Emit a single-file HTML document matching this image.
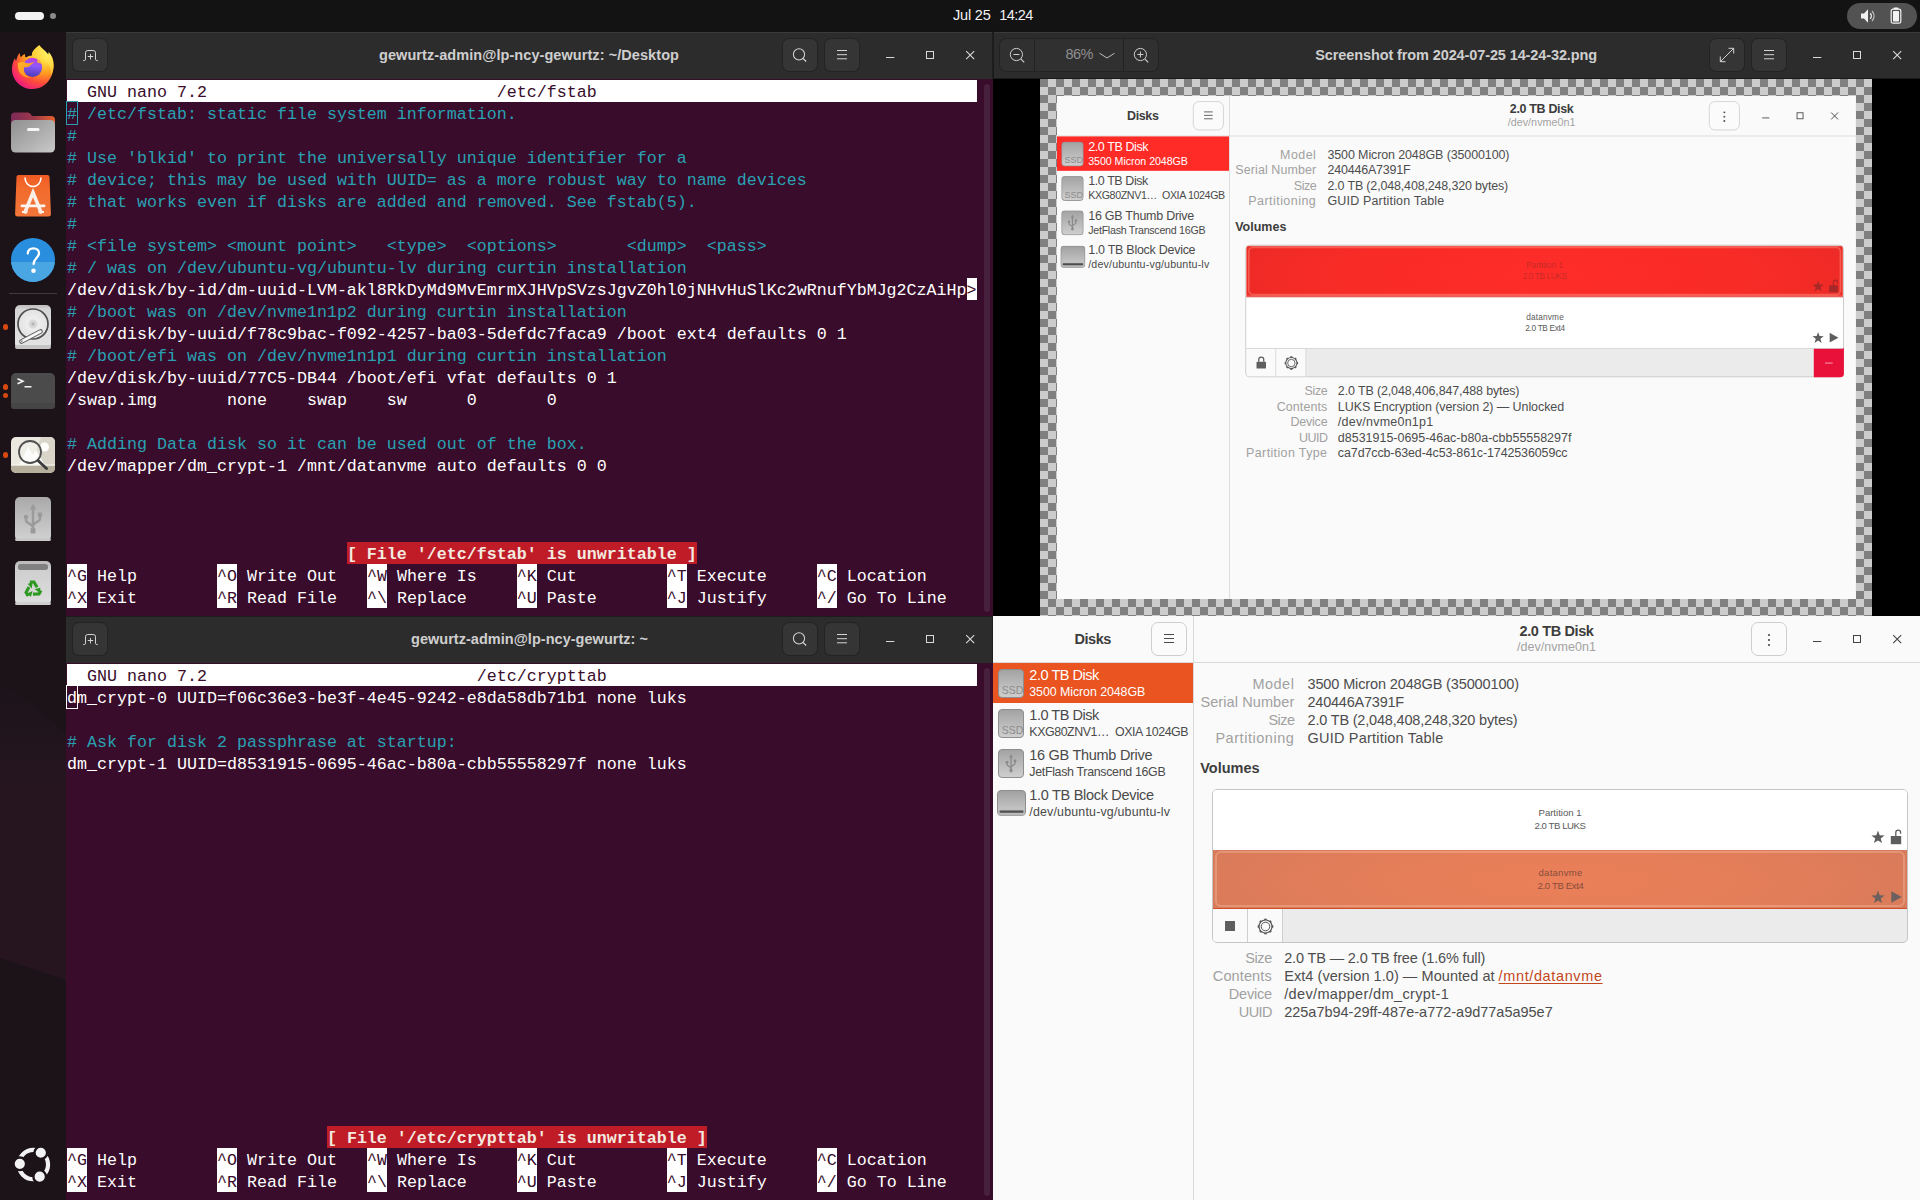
<!DOCTYPE html><html><head><meta charset="utf-8"><title>desktop</title><style>
*{box-sizing:border-box;margin:0;padding:0}
html,body{width:1920px;height:1200px;overflow:hidden;background:#1c1319}
body{position:relative;font-family:"Liberation Sans",sans-serif;font-size:14.5px;color:#3d3d3d}
.a{position:absolute}
.t{position:absolute;white-space:pre;line-height:1;}
.b{font-weight:700}
.mono{font-family:"Liberation Mono",monospace;font-size:16.667px;}
#topbar{left:0;top:0;width:1920px;height:32px;background:#131313}
#dock{left:0;top:32px;width:66px;height:1168px;background:#1c1319}
.hdr{background:#2c2c2c;border-top:1px solid #3b3b3b}
.hbtn{background:#353535;border-radius:7px;box-shadow:inset 0 0 0 1px #232323}
.term{background:#380c2a;overflow:hidden}
.row{position:absolute;left:1px;height:22px;line-height:22px;white-space:pre;font-family:"Liberation Mono",monospace;font-size:16.667px;color:#fff;padding-top:2px}
.c{color:#2aa1b3}
.inv{color:#380c2a}
.err{color:#f3ebe0;font-weight:700}
.lbl{color:#9d9d9d}
</style></head><body><div id="dock" class="a"><div class="a" style="left:0;top:0;width:66px;height:1168px;background:linear-gradient(180deg,rgba(38,21,31,0) 650px,#26151f 760px,#26151f 100%);clip-path:polygon(0 648px,66px 701px,66px 948px,0 926px)"></div></div><svg class="a" style="left:9px;top:43px;" width="48" height="48" viewBox="0 0 48 48">
<defs>
<radialGradient id="ffa" cx="0.80" cy="0.12" r="1.05"><stop offset="0" stop-color="#fff36a"/><stop offset="0.28" stop-color="#ffd43a"/><stop offset="0.5" stop-color="#ff9a1f"/><stop offset="0.72" stop-color="#ff4b3a"/><stop offset="0.92" stop-color="#f0207a"/><stop offset="1" stop-color="#e31587"/></radialGradient>
<linearGradient id="ffb" x1="0.5" y1="0" x2="0.4" y2="1"><stop offset="0" stop-color="#c23be0"/><stop offset="0.4" stop-color="#8f58fb"/><stop offset="1" stop-color="#4a3bb5"/></linearGradient>
<linearGradient id="ffc" x1="0" y1="0" x2="1" y2="1"><stop offset="0" stop-color="#ffb52e"/><stop offset="1" stop-color="#ff8a1a"/></linearGradient>
<radialGradient id="ffd" cx="0.75" cy="0.2" r="0.8"><stop offset="0" stop-color="#fff56a"/><stop offset="1" stop-color="#ffc52e"/></radialGradient>
</defs>
<path d="M30.200 2.300C32.500 5.500 36.500 8 39.300 11.800c.5-.9.500-1.800.3-2.700 3.100 3.300 5 7.900 5 13.200C44.600 35.800 35.500 46 23.600 46S3 36.800 3 26.200c0-4.300 1.100-8.100 3-11.200.1 1.200.5 2.300 1.100 3.300.6-3.600 2-6.400 3.500-8.500.1 1.700.5 3.200 1.200 4.400 1.100-1.500 2.700-2.700 4.200-3.200-.2 1.300.1 2.600.7 3.600 2-1.400 4.300-2.100 6.300-2.100C22.500 8.800 26 5.500 30.200 2.300z" fill="url(#ffa)"/>
<path d="M30.200 2.300C32.500 5.500 36.500 8 39.300 11.800c.5-.9.500-1.800.3-2.700 3.100 3.300 5 7.900 5 13.200 0 4-1.200 7.700-3.200 10.800 1-3.300.6-7.500-1.400-10.800-2-3.300-5.300-5.800-9.300-6.500-2.800-.5-5.500-.2-7.700-3.300C22.500 8.800 26 5.500 30.200 2.300z" fill="url(#ffd)" opacity="0.85"/>
<circle cx="23.500" cy="24.400" r="9.600" fill="url(#ffb)"/>
<path d="M8.800 20.300c2.600-1.700 5.500-1.500 7.700-.6 2.200.9 4.600.6 6.700-.2 1.100-.4 2-.2 2.600.3-1.900.2-3.400 1.500-4.800 2.900-1.500 1.400-3.700 1.700-5.500 1.300 -1 2.300-.6 4.800.7 6.700 1.300 1.900 3.300 3.200 5.500 3.600-5 1.300-10.300-1.700-12-6.700-.8-2.400-.9-5-.9-7.300z" fill="url(#ffc)"/>
<path d="M28 16.300c2.400 1 4 3 4.700 5.200-1.300-1.300-2.900-2-4.500-2.100.3-1 .2-2.100-.2-3.100z" fill="#ffb02e"/>
</svg><svg class="a" style="left:11px;top:110px;" width="44" height="44" viewBox="0 0 44 44">
<defs>
<linearGradient id="fla" x1="0" y1="0" x2="1" y2="0"><stop offset="0" stop-color="#7b2a58"/><stop offset="0.55" stop-color="#a03a4a"/><stop offset="1" stop-color="#e8632a"/></linearGradient>
<linearGradient id="flb" x1="0" y1="0" x2="1" y2="1"><stop offset="0" stop-color="#8f8f8f"/><stop offset="1" stop-color="#c9c9c9"/></linearGradient>
</defs>
<path d="M0 6.500a4 4 0 0 1 4-4h12.500c1.500 0 2.200.5 3 1.500l1 1.200c.5.600 1 .8 2 .8H40a4 4 0 0 1 4 4V30H0z" fill="url(#fla)"/>
<rect x="0" y="10" width="44" height="32.500" rx="4.500" fill="url(#flb)"/>
<rect x="16" y="18" width="12.500" height="3" rx="1.500" fill="#f6f6f6"/>
</svg><svg class="a" style="left:15px;top:174px;" width="36" height="44" viewBox="0 0 36 44">
<defs><linearGradient id="apa" x1="0" y1="0" x2="0" y2="1"><stop offset="0" stop-color="#f05a22"/><stop offset="0.3" stop-color="#f26a2c"/><stop offset="1" stop-color="#f2763a"/></linearGradient></defs>
<path d="M3.500 1h29a2 2 0 0 1 2 1.800l1.400 37a2.500 2.500 0 0 1-2.500 2.700H2.600A2.500 2.500 0 0 1 .1 39.800l1.400-37A2 2 0 0 1 3.500 1z" fill="url(#apa)"/>
<path d="M10 3.500c0 5.500 3.500 9 8 9s8-3.500 8-9" fill="none" stroke="#fff" stroke-width="1.600"/>
<path d="M9.500 39.500 18 18.500 26.500 39.500" fill="none" stroke="#fbeee6" stroke-width="3.600"/>
<rect x="5.500" y="30.500" width="25" height="2.800" rx="1.400" fill="#fdf4ef"/>
<rect x="7" y="37" width="5.500" height="2" fill="#fbeee6"/><rect x="23.500" y="37" width="5.500" height="2" fill="#fbeee6"/>
</svg><svg class="a" style="left:11px;top:238px;" width="44" height="44" viewBox="0 0 44 44">
<defs><clipPath id="hc"><circle cx="22" cy="22" r="22"/></clipPath></defs>
<circle cx="22" cy="22" r="22" fill="#2a8ede"/>
<rect x="0" y="24" width="44" height="20" fill="#4aa5e3" clip-path="url(#hc)"/>
<path d="M16.800 15.500c0-3.200 2.400-5.200 5.600-5.200s5.600 1.900 5.600 4.900c0 4.600-5.400 5.200-5.400 10.800" fill="none" stroke="#fff" stroke-width="2.300" stroke-linecap="round"/>
<circle cx="22.500" cy="32.800" r="2.300" fill="#fff"/>
</svg><div class="a " style="left:9px;top:293px;width:48px;height:1px;background:#403a3e"></div><svg class="a" style="left:15px;top:304px;" width="36" height="46" viewBox="0 0 36 46">
<defs><linearGradient id="dka" x1="0" y1="0" x2="0" y2="1"><stop offset="0" stop-color="#bdbdbd"/><stop offset="0.1" stop-color="#d6d6d6"/><stop offset="1" stop-color="#e4e4e4"/></linearGradient>
<radialGradient id="dkb"><stop offset="0" stop-color="#f4f4f4"/><stop offset="1" stop-color="#e2e2e2"/></radialGradient></defs>
<rect x="0" y="1" width="36" height="44" rx="5" fill="url(#dka)"/>
<rect x="0" y="41" width="36" height="4" rx="2" fill="#c4c4c4"/>
<circle cx="18" cy="20" r="15" fill="url(#dkb)" stroke="#4d4d4d" stroke-width="1.700"/>
<circle cx="18" cy="20" r="4.500" fill="#d9d9d9"/><circle cx="18" cy="20" r="2" fill="#c6c6c6"/><circle cx="18" cy="20" r="0.800" fill="#a0a0a0"/>
<path d="M25.500 27.500 6.500 37.500" stroke="#5a5a5a" stroke-width="4.600" stroke-linecap="round"/>
<path d="M25.500 27.500 6.500 37.500" stroke="#f6f6f6" stroke-width="2.600" stroke-linecap="round"/>
<circle cx="6.800" cy="37.300" r="1" fill="#9a9a9a"/>
</svg><svg class="a" style="left:11px;top:372px;" width="44" height="38" viewBox="0 0 44 38">
<rect x="0" y="1" width="44" height="36" rx="5" fill="#4b4b4b"/>
<rect x="0" y="31" width="44" height="6" rx="3" fill="#454545"/>
<path d="M6.500 6.700 12 9.200 6.500 11.700" fill="none" stroke="#f5f5f5" stroke-width="1.500"/>
<rect x="13.500" y="14" width="7" height="1.500" fill="#f5f5f5"/>
</svg><svg class="a" style="left:11px;top:436px;" width="44" height="38" viewBox="0 0 44 38">
<defs><clipPath id="ivc"><rect x="0" y="1" width="44" height="36" rx="5"/></clipPath></defs>
<g clip-path="url(#ivc)">
<rect x="0" y="0" width="44" height="38" fill="#eae8df"/>
<path d="M30 1h14v28H20z" fill="#d9d6c9"/>
<path d="M8 29 17 11l5 8 3-5 9 15z" fill="#fbfbf8"/>
<circle cx="33.500" cy="11" r="4.500" fill="#fdfdfb"/>
<rect x="0" y="29" width="44" height="9" fill="#b5af9b"/>
<rect x="0" y="28.500" width="44" height="1.200" fill="#f7f6f1"/>
</g>
<circle cx="19" cy="16" r="11" fill="rgba(255,255,255,.25)" stroke="#4f4f4f" stroke-width="1.800"/>
<path d="M27 24.500 35.500 32.500" stroke="#3d3d3d" stroke-width="3" stroke-linecap="round"/>
</svg><svg class="a" style="left:15px;top:496px;" width="36" height="46" viewBox="0 0 36 46">
<defs><linearGradient id="usa" x1="0" y1="0" x2="0" y2="1"><stop offset="0" stop-color="#a9a9a9"/><stop offset="1" stop-color="#d2d2d2"/></linearGradient></defs>
<rect x="0" y="1" width="36" height="44" rx="5" fill="url(#usa)"/>
<rect x="0" y="42" width="36" height="3" rx="2" fill="#c8c8c8"/>
<g fill="none" stroke="#9b9b9b" stroke-width="2.400">
<path d="M18 12v22"/>
<path d="M11 22v2.500c0 2.500 7 3.500 7 7"/>
<path d="M25 19.500v3.500c0 2.500-7 3.500-7 7"/>
</g>
<path d="M18 7.500l3.300 6h-6.600z" fill="#9b9b9b"/>
<circle cx="11" cy="21" r="2.300" fill="#9b9b9b"/>
<rect x="22.800" y="16.500" width="4.400" height="4.400" fill="#9b9b9b"/>
<rect x="15.500" y="32" width="5" height="5.500" rx="1" fill="#9b9b9b"/>
</svg><svg class="a" style="left:15px;top:560px;" width="36" height="46" viewBox="0 0 36 46">
<defs><linearGradient id="tra" x1="0" y1="0" x2="0" y2="1"><stop offset="0" stop-color="#b8b8b8"/><stop offset="0.2" stop-color="#cfcfcf"/><stop offset="1" stop-color="#dedede"/></linearGradient></defs>
<rect x="0" y="1" width="36" height="44" rx="5" fill="url(#tra)"/>
<rect x="0" y="42" width="36" height="3" rx="2" fill="#cfcfcf"/>
<rect x="3" y="4" width="30" height="6" rx="2.500" fill="#808080"/>
<g fill="none" stroke="#2f9a22" stroke-width="2.600" transform="translate(18,29.500) scale(1.200)">
<path d="M-2.600-6.200h3.400l2.600 4.300"/><path d="M-2.600-6.200h3.400l2.600 4.300" transform="rotate(120)"/><path d="M-2.600-6.200h3.400l2.600 4.300" transform="rotate(240)"/>
</g>
<g fill="#2f9a22" transform="translate(18,29.500) scale(1.200)">
<path d="M1.300-0.400l4.800-1.100-0.300 4.600z"/><path d="M1.300-0.400l4.800-1.100-0.300 4.600z" transform="rotate(120)"/><path d="M1.300-0.400l4.800-1.100-0.300 4.600z" transform="rotate(240)"/>
</g>
</svg><div class="a " style="left:3px;top:324.3px;width:5.4px;height:5.4px;background:#d8480f;border-radius:3px"></div><div class="a " style="left:3px;top:384.3px;width:5.4px;height:5.4px;background:#d8480f;border-radius:3px"></div><div class="a " style="left:3px;top:392.8px;width:5.4px;height:5.4px;background:#d8480f;border-radius:3px"></div><div class="a " style="left:3px;top:452.3px;width:5.4px;height:5.4px;background:#d8480f;border-radius:3px"></div><svg class="a" style="left:9px;top:1140px;" width="48" height="48" viewBox="0 0 48 48">
<circle cx="24.400" cy="24.550" r="14.650" fill="none" stroke="#f2f2f2" stroke-width="4.200"/>
<g fill="#f2f2f2" stroke="#1c1319" stroke-width="2.400">
<circle cx="31.800" cy="12.750" r="6.300"/>
<circle cx="10.800" cy="23.800" r="6.300"/>
<circle cx="30.700" cy="36.700" r="6.300"/>
</g>
</svg><div class="a hdr" style="left:66px;top:32px;width:927px;height:47px;"></div><div class="a " style="left:992px;top:32px;width:1px;height:47px;background:#1e1e1e"></div><div class="a hbtn" style="left:72px;top:38px;width:36px;height:34px;"></div><svg class="a" style="left:82px;top:49px;" width="17" height="13" viewBox="0 0 17 13"><path d="M1.200 11.500h1.100a1.200 1.200 0 0 0 1.200-1.200V3.800a2.300 2.300 0 0 1 2.300-2.300h5.400a2.300 2.300 0 0 1 2.300 2.300v6.500a1.200 1.200 0 0 0 1.200 1.200h1.100" fill="none" stroke="#d4d4d4" stroke-width="1"/><path d="M8.500 5v5.400M5.800 7.500h5.400" stroke="#d4d4d4" stroke-width="1"/></svg><div class="t " style="left:379px;top:47.73px;font-size:14.5px;letter-spacing:0.069px;font-weight:700;color:#cfcfcf;">gewurtz-admin@lp-ncy-gewurtz: ~/Desktop</div><div class="a hbtn" style="left:782px;top:38px;width:36px;height:34px;"></div><svg class="a" style="left:790px;top:46px;" width="20" height="20" viewBox="0 0 20 20"><circle cx="9" cy="8.300" r="5.600" fill="none" stroke="#d4d4d4" stroke-width="1.050"/><path d="M12.900 12.400 16.200 15.500" stroke="#d4d4d4" stroke-width="1.300"/></svg><div class="a hbtn" style="left:824px;top:38px;width:36px;height:34px;"></div><svg class="a" style="left:836px;top:48px;" width="12" height="12" viewBox="0 0 12 12"><path d="M1 2.500h10M1 6.700h10M1 10.800h10" stroke="#d4d4d4" stroke-width="1"/></svg><svg class="a" style="left:880px;top:32px;" width="100" height="47" viewBox="0 0 100 47"><path d="M6 25.500h8.300" stroke="#dadada" stroke-width="1"/><rect x="46.500" y="19.500" width="7" height="7" fill="none" stroke="#dadada" stroke-width="1"/><path d="M86.200 19.200l8 8M94.200 19.200l-8 8" stroke="#dadada" stroke-width="1.100"/></svg><div class="a term" style="left:66px;top:79px;width:927px;height:537px"><div class="a" style="left:1px;top:1px;width:910px;height:22px;background:#fff"></div><div class="a" style="left:281px;top:463px;width:350px;height:22px;background:#c01c28"></div><div class="a" style="left:1px;top:485px;width:20px;height:44px;background:#fff"></div><div class="a" style="left:151px;top:485px;width:20px;height:44px;background:#fff"></div><div class="a" style="left:301px;top:485px;width:20px;height:44px;background:#fff"></div><div class="a" style="left:451px;top:485px;width:20px;height:44px;background:#fff"></div><div class="a" style="left:601px;top:485px;width:20px;height:44px;background:#fff"></div><div class="a" style="left:751px;top:485px;width:20px;height:44px;background:#fff"></div><div class="a" style="left:901px;top:199px;width:10px;height:22px;background:#fff"></div><div class="row" style="top:1px;color:#380c2a">  GNU nano 7.2                             /etc/fstab</div><div class="row" style="top:23px"><span class="c"># /etc/fstab: static file system information.</span></div><div class="row" style="top:45px"><span class="c">#</span></div><div class="row" style="top:67px"><span class="c"># Use 'blkid' to print the universally unique identifier for a</span></div><div class="row" style="top:89px"><span class="c"># device; this may be used with UUID= as a more robust way to name devices</span></div><div class="row" style="top:111px"><span class="c"># that works even if disks are added and removed. See fstab(5).</span></div><div class="row" style="top:133px"><span class="c">#</span></div><div class="row" style="top:155px"><span class="c"># &lt;file system&gt; &lt;mount point&gt;   &lt;type&gt;  &lt;options&gt;       &lt;dump&gt;  &lt;pass&gt;</span></div><div class="row" style="top:177px"><span class="c"># / was on /dev/ubuntu-vg/ubuntu-lv during curtin installation</span></div><div class="row" style="top:199px">/dev/disk/by-id/dm-uuid-LVM-akl8RkDyMd9MvEmrmXJHVpSVzsJgvZ0hl0jNHvHuSlKc2wRnufYbMJg2CzAiHp<span class="inv">&gt;</span></div><div class="row" style="top:221px"><span class="c"># /boot was on /dev/nvme1n1p2 during curtin installation</span></div><div class="row" style="top:243px">/dev/disk/by-uuid/f78c9bac-f092-4257-ba03-5defdc7faca9 /boot ext4 defaults 0 1</div><div class="row" style="top:265px"><span class="c"># /boot/efi was on /dev/nvme1n1p1 during curtin installation</span></div><div class="row" style="top:287px">/dev/disk/by-uuid/77C5-DB44 /boot/efi vfat defaults 0 1</div><div class="row" style="top:309px">/swap.img       none    swap    sw      0       0</div><div class="row" style="top:353px"><span class="c"># Adding Data disk so it can be used out of the box.</span></div><div class="row" style="top:375px">/dev/mapper/dm_crypt-1 /mnt/datanvme auto defaults 0 0</div><div class="row" style="top:463px">                            <span class="err">[ File '/etc/fstab' is unwritable ]</span></div><div class="row" style="top:485px"><span class="inv">^G</span> Help        <span class="inv">^O</span> Write Out   <span class="inv">^W</span> Where Is    <span class="inv">^K</span> Cut         <span class="inv">^T</span> Execute     <span class="inv">^C</span> Location    </div><div class="row" style="top:507px"><span class="inv">^X</span> Exit        <span class="inv">^R</span> Read File   <span class="inv">^\</span> Replace     <span class="inv">^U</span> Paste       <span class="inv">^J</span> Justify     <span class="inv">^/</span> Go To Line  </div><div class="a" style="left:0px;top:22px;width:12px;height:24px;border:1px solid #2aa1b3"></div><div class="a" style="left:918px;top:5px;width:6px;height:528px;background:#47203d;border-radius:3px"></div></div><div class="a hdr" style="left:66px;top:616px;width:927px;height:47px;border-top-color:#1c1c1c"></div><div class="a " style="left:992px;top:616px;width:1px;height:47px;background:#1e1e1e"></div><div class="a hbtn" style="left:72px;top:622px;width:36px;height:34px;"></div><svg class="a" style="left:82px;top:633px;" width="17" height="13" viewBox="0 0 17 13"><path d="M1.200 11.500h1.100a1.200 1.200 0 0 0 1.200-1.200V3.800a2.300 2.300 0 0 1 2.300-2.300h5.400a2.300 2.300 0 0 1 2.300 2.300v6.500a1.200 1.200 0 0 0 1.200 1.200h1.100" fill="none" stroke="#d4d4d4" stroke-width="1"/><path d="M8.500 5v5.400M5.800 7.500h5.400" stroke="#d4d4d4" stroke-width="1"/></svg><div class="t " style="left:411px;top:631.73px;font-size:14.5px;letter-spacing:0.030px;font-weight:700;color:#cfcfcf;">gewurtz-admin@lp-ncy-gewurtz: ~</div><div class="a hbtn" style="left:782px;top:622px;width:36px;height:34px;"></div><svg class="a" style="left:790px;top:630px;" width="20" height="20" viewBox="0 0 20 20"><circle cx="9" cy="8.300" r="5.600" fill="none" stroke="#d4d4d4" stroke-width="1.050"/><path d="M12.900 12.400 16.200 15.500" stroke="#d4d4d4" stroke-width="1.300"/></svg><div class="a hbtn" style="left:824px;top:622px;width:36px;height:34px;"></div><svg class="a" style="left:836px;top:632px;" width="12" height="12" viewBox="0 0 12 12"><path d="M1 2.500h10M1 6.700h10M1 10.800h10" stroke="#d4d4d4" stroke-width="1"/></svg><svg class="a" style="left:880px;top:616px;" width="100" height="47" viewBox="0 0 100 47"><path d="M6 25.500h8.300" stroke="#dadada" stroke-width="1"/><rect x="46.500" y="19.500" width="7" height="7" fill="none" stroke="#dadada" stroke-width="1"/><path d="M86.200 19.200l8 8M94.200 19.200l-8 8" stroke="#dadada" stroke-width="1.100"/></svg><div class="a term" style="left:66px;top:663px;width:927px;height:537px"><div class="a" style="left:1px;top:1px;width:910px;height:22px;background:#fff"></div><div class="a" style="left:261px;top:463px;width:380px;height:22px;background:#c01c28"></div><div class="a" style="left:1px;top:485px;width:20px;height:44px;background:#fff"></div><div class="a" style="left:151px;top:485px;width:20px;height:44px;background:#fff"></div><div class="a" style="left:301px;top:485px;width:20px;height:44px;background:#fff"></div><div class="a" style="left:451px;top:485px;width:20px;height:44px;background:#fff"></div><div class="a" style="left:601px;top:485px;width:20px;height:44px;background:#fff"></div><div class="a" style="left:751px;top:485px;width:20px;height:44px;background:#fff"></div><div class="row" style="top:1px;color:#380c2a">  GNU nano 7.2                           /etc/crypttab</div><div class="row" style="top:23px">dm_crypt-0 UUID=f06c36e3-be3f-4e45-9242-e8da58db71b1 none luks</div><div class="row" style="top:67px"><span class="c"># Ask for disk 2 passphrase at startup:</span></div><div class="row" style="top:89px">dm_crypt-1 UUID=d8531915-0695-46ac-b80a-cbb55558297f none luks</div><div class="row" style="top:463px">                          <span class="err">[ File '/etc/crypttab' is unwritable ]</span></div><div class="row" style="top:485px"><span class="inv">^G</span> Help        <span class="inv">^O</span> Write Out   <span class="inv">^W</span> Where Is    <span class="inv">^K</span> Cut         <span class="inv">^T</span> Execute     <span class="inv">^C</span> Location    </div><div class="row" style="top:507px"><span class="inv">^X</span> Exit        <span class="inv">^R</span> Read File   <span class="inv">^\</span> Replace     <span class="inv">^U</span> Paste       <span class="inv">^J</span> Justify     <span class="inv">^/</span> Go To Line  </div><div class="a" style="left:0px;top:22px;width:12px;height:24px;border:1px solid #ffffff"></div><div class="a" style="left:918px;top:5px;width:6px;height:528px;background:#47203d;border-radius:3px"></div></div><div class="a " style="left:993px;top:32px;width:927px;height:584px;background:#000"></div><div class="a hdr" style="left:993px;top:32px;width:927px;height:47px;"></div><div class="a " style="left:993px;top:32px;width:1px;height:47px;background:#1c1c1c"></div><div class="a " style="left:993px;top:78px;width:927px;height:1px;background:#1a1a1a"></div><div class="a hbtn" style="left:999px;top:38px;width:160px;height:34px;background:#303030"></div><div class="a " style="left:1034px;top:39px;width:1px;height:32px;background:#222"></div><div class="a " style="left:1123px;top:39px;width:1px;height:32px;background:#222"></div><svg class="a" style="left:1008px;top:46px;" width="18" height="18" viewBox="0 0 18 18"><circle cx="8.400" cy="8.500" r="6.100" fill="none" stroke="#cfcfcf" stroke-width="1"/><path d="M12.800 12.900 16.200 16.300" stroke="#cfcfcf" stroke-width="1.200"/><path d="M5.400 8.500h6" stroke="#cfcfcf" stroke-width="1"/></svg><div class="t " style="left:1065.5px;top:47.23px;font-size:14.5px;letter-spacing:-0.507px;color:#8f8f8f;">86%</div><svg class="a" style="left:1099px;top:52px;" width="16" height="8" viewBox="0 0 16 8"><path d="M0.500 1.200 8 6 15.500 1.200" fill="none" stroke="#bdbdbd" stroke-width="1"/></svg><svg class="a" style="left:1132px;top:46px;" width="18" height="18" viewBox="0 0 18 18"><circle cx="8.400" cy="8.500" r="6.100" fill="none" stroke="#cfcfcf" stroke-width="1"/><path d="M12.800 12.900 16.200 16.300" stroke="#cfcfcf" stroke-width="1.200"/><path d="M5.400 8.500h6M8.400 5.500v6" stroke="#cfcfcf" stroke-width="1"/></svg><div class="t " style="left:1315.3px;top:47.53px;font-size:14.5px;letter-spacing:-0.113px;font-weight:700;color:#cfcfcf;">Screenshot from 2024-07-25 14-24-32.png</div><div class="a hbtn" style="left:1709px;top:38px;width:36px;height:34px;"></div><svg class="a" style="left:1718px;top:46px;" width="18" height="18" viewBox="0 0 18 18"><path d="M2.300 15.700 15.700 2.300M10.500 2.300h5.200v5.200M2.300 10.500v5.200h5.200" fill="none" stroke="#d4d4d4" stroke-width="1"/></svg><div class="a hbtn" style="left:1751px;top:38px;width:36px;height:34px;"></div><svg class="a" style="left:1763px;top:48px;" width="12" height="12" viewBox="0 0 12 12"><path d="M1 2.500h10M1 6.700h10M1 10.800h10" stroke="#d4d4d4" stroke-width="1"/></svg><svg class="a" style="left:1807px;top:32px;" width="100" height="47" viewBox="0 0 100 47"><path d="M6 25.500h8.300" stroke="#dadada" stroke-width="1"/><rect x="46.500" y="19.500" width="7" height="7" fill="none" stroke="#dadada" stroke-width="1"/><path d="M86.200 19.200l8 8M94.200 19.200l-8 8" stroke="#dadada" stroke-width="1.100"/></svg><div class="a " style="left:1040px;top:79px;width:832px;height:537px;background-color:#808080;background-image:conic-gradient(#ccc 25%,#808080 0 50%,#ccc 0 75%,#808080 0);background-size:16px 16px;overflow:hidden"><div class="a" style="left:17px;top:17px;width:929px;height:585px;transform-origin:0 0;transform:scale(0.86);overflow:hidden"><div class="a " style="left:0px;top:0px;width:929px;height:585px;background:#fafafa"></div><div class="a " style="left:200px;top:0px;width:1px;height:585px;background:#d9d9d9"></div><div class="a " style="left:0px;top:46px;width:929px;height:1px;background:#d9d9d9"></div><div class="t " style="left:81.5px;top:15.73px;font-size:14.5px;letter-spacing:-0.439px;font-weight:700;color:#3d3d3d;">Disks</div><div class="a " style="left:158px;top:6px;width:36px;height:34px;border:1px solid #cfcfcf;border-radius:7px;background:#fbfbfb"></div><svg class="a" style="left:170px;top:16px;" width="12" height="14" viewBox="0 0 12 14"><path d="M1 2.500h10M1 6.500h10M1 10.500h10" stroke="#4a4a4a" stroke-width="1"/></svg><div class="t " style="left:526.5px;top:7.73px;font-size:14.5px;letter-spacing:-0.379px;font-weight:700;color:#3d3d3d;">2.0 TB Disk</div><div class="t " style="left:524.0px;top:25.22px;font-size:12.5px;letter-spacing:0.040px;color:#a3a3a3;">/dev/nvme0n1</div><div class="a " style="left:758px;top:6px;width:36px;height:34px;border:1px solid #cfcfcf;border-radius:7px;background:#fbfbfb"></div><svg class="a" style="left:774px;top:16px;" width="4" height="16" viewBox="0 0 4 16"><circle cx="2" cy="3" r="1.100" fill="#4a4a4a"/><circle cx="2" cy="8" r="1.100" fill="#4a4a4a"/><circle cx="2" cy="13" r="1.100" fill="#4a4a4a"/></svg><svg class="a" style="left:814px;top:-0.5px;" width="100" height="47" viewBox="0 0 100 47"><path d="M6 25.500h8.300" stroke="#444" stroke-width="1"/><rect x="46.500" y="19.500" width="7" height="7" fill="none" stroke="#444" stroke-width="1"/><path d="M86.200 19.200l8 8M94.200 19.200l-8 8" stroke="#444" stroke-width="1.100"/></svg><div class="a " style="left:0px;top:47px;width:200px;height:40px;background:#ff2b27"></div><svg class="a" style="left:5px;top:52.5px;" width="26" height="29" viewBox="0 0 26 29"><defs><linearGradient id="sgr0" x1="0" y1="0" x2="0" y2="1"><stop offset="0" stop-color="#a2a2a2"/><stop offset="1" stop-color="#cfcfcf"/></linearGradient></defs>
<rect x="0.500" y="0.500" width="25" height="28" rx="3.500" fill="url(#sgr0)" stroke="#8e8e8e" stroke-width="1"/><text x="3.800" y="25.200" font-family="Liberation Sans" font-size="10.300" fill="#8c8c8c" textLength="21.500" lengthAdjust="spacingAndGlyphs">SSD</text></svg><div class="t " style="left:36.3px;top:51.83px;font-size:14.5px;letter-spacing:-0.461px;color:#ffffff;">2.0 TB Disk</div><div class="t " style="left:36.3px;top:69.9px;font-size:12.4px;letter-spacing:-0.066px;color:#ffffff;">3500 Micron 2048GB</div><svg class="a" style="left:5px;top:92.5px;" width="26" height="29" viewBox="0 0 26 29"><defs><linearGradient id="sgr1" x1="0" y1="0" x2="0" y2="1"><stop offset="0" stop-color="#a2a2a2"/><stop offset="1" stop-color="#cfcfcf"/></linearGradient></defs>
<rect x="0.500" y="0.500" width="25" height="28" rx="3.500" fill="url(#sgr1)" stroke="#8e8e8e" stroke-width="1"/><text x="3.800" y="25.200" font-family="Liberation Sans" font-size="10.300" fill="#8c8c8c" textLength="21.500" lengthAdjust="spacingAndGlyphs">SSD</text></svg><div class="t " style="left:36.3px;top:91.83px;font-size:14.5px;letter-spacing:-0.479px;color:#4a4a4a;">1.0 TB Disk</div><div class="t " style="left:36.3px;top:109.9px;font-size:12.4px;letter-spacing:-0.429px;color:#4a4a4a;">KXG80ZNV1…  OXIA 1024GB</div><svg class="a" style="left:5px;top:132.5px;" width="26" height="29" viewBox="0 0 26 29"><defs><linearGradient id="sgr2" x1="0" y1="0" x2="0" y2="1"><stop offset="0" stop-color="#a2a2a2"/><stop offset="1" stop-color="#cfcfcf"/></linearGradient></defs>
<rect x="0.500" y="0.500" width="25" height="28" rx="3.500" fill="url(#sgr2)" stroke="#8e8e8e" stroke-width="1"/><g fill="none" stroke="#8a8a8a" stroke-width="1.300"><path d="M13 8v13"/><path d="M9 14v1.500c0 1.500 4 2 4 4"/><path d="M17 12.500v2c0 1.500-4 2-4 4"/></g>
<path d="M13 5l2 3.600h-4z" fill="#8a8a8a"/><circle cx="9" cy="13.300" r="1.400" fill="#8a8a8a"/><rect x="15.700" y="10.500" width="2.600" height="2.600" fill="#8a8a8a"/><rect x="11.600" y="20" width="2.800" height="3.200" rx="0.600" fill="#8a8a8a"/></svg><div class="t " style="left:36.3px;top:131.83px;font-size:14.5px;letter-spacing:-0.286px;color:#4a4a4a;">16 GB Thumb Drive</div><div class="t " style="left:36.3px;top:149.9px;font-size:12.4px;letter-spacing:-0.311px;color:#4a4a4a;">JetFlash Transcend 16GB</div><svg class="a" style="left:4px;top:174px;" width="29" height="26" viewBox="0 0 29 26"><defs><linearGradient id="bgr3" x1="0" y1="0" x2="0" y2="1"><stop offset="0" stop-color="#a0a0a0"/><stop offset="1" stop-color="#d0d0d0"/></linearGradient></defs>
<rect x="0.500" y="0.500" width="28" height="25" rx="3.500" fill="url(#bgr3)" stroke="#8e8e8e"/>
<path d="M1 19.500h27v3a3 3 0 0 1-3 3h-21a3 3 0 0 1-3-3z" fill="#b9b9b9"/>
<rect x="2.500" y="20.500" width="24" height="2.200" rx="1" fill="#4f4f4f"/></svg><div class="t " style="left:36.3px;top:171.83px;font-size:14.5px;letter-spacing:-0.305px;color:#4a4a4a;">1.0 TB Block Device</div><div class="t " style="left:36.3px;top:189.9px;font-size:12.4px;letter-spacing:0.188px;color:#4a4a4a;">/dev/ubuntu-vg/ubuntu-lv</div><div class="t " style="left:259.4px;top:60.83px;font-size:14.5px;letter-spacing:0.501px;color:#a1a1a1;">Model</div><div class="t " style="left:314.5px;top:60.83px;font-size:14.5px;letter-spacing:-0.129px;color:#4d4d4d;">3500 Micron 2048GB (35000100)</div><div class="t " style="left:207.4px;top:78.88px;font-size:14.5px;letter-spacing:0.102px;color:#a1a1a1;">Serial Number</div><div class="t " style="left:314.5px;top:78.88px;font-size:14.5px;letter-spacing:-0.223px;color:#4d4d4d;">240446A7391F</div><div class="t " style="left:275.4px;top:96.93px;font-size:14.5px;letter-spacing:-0.552px;color:#a1a1a1;">Size</div><div class="t " style="left:314.5px;top:96.93px;font-size:14.5px;letter-spacing:-0.180px;color:#4d4d4d;">2.0 TB (2,048,408,248,320 bytes)</div><div class="t " style="left:222.4px;top:114.98px;font-size:14.5px;letter-spacing:0.538px;color:#a1a1a1;">Partitioning</div><div class="t " style="left:314.5px;top:114.98px;font-size:14.5px;letter-spacing:0.205px;color:#4d4d4d;">GUID Partition Table</div><div class="t " style="left:207.2px;top:144.53px;font-size:14.5px;letter-spacing:0.020px;font-weight:700;color:#3d3d3d;">Volumes</div><div class="a" style="left:219px;top:173px;width:696px;height:154px;border:1px solid #c6c6c6;border-radius:5px;background:#ebebeb;overflow:hidden"><div class="a" style="left:0;top:60px;width:694px;height:60px;background:#fff"></div><div class="a" style="left:0;top:0px;width:694px;height:60px;background:radial-gradient(ellipse 60% 140% at 50% 55%, #ff2d29 0%, #f92b27 55%, #ea2a26 100%);border-bottom:1px solid #e0342c;box-shadow:inset 0 0 0 1px rgba(255,150,130,.55);"><div class="a" style="left:2px;top:1px;right:2px;bottom:1px;border:2px solid rgba(255,220,195,.27);border-radius:6px"></div></div><div class="a" style="left:0;top:119px;width:35px;height:34px;background:#fafafa;border-right:1px solid #cfcfcf"></div><div class="a" style="left:35px;top:119px;width:35px;height:34px;background:#fafafa;border-right:1px solid #cfcfcf"></div></div><div class="t " style="left:545.5px;top:191.67px;font-size:9.6px;letter-spacing:-0.020px;color:rgba(150,40,40,.55);">Partition 1</div><div class="t " style="left:541.5px;top:204.62px;font-size:9.6px;letter-spacing:-0.441px;color:rgba(150,40,40,.55);">2.0 TB LUKS</div><div class="t " style="left:545.5px;top:251.57px;font-size:9.6px;letter-spacing:0.230px;color:#5a5a5a;">datanvme</div><div class="t " style="left:544.5px;top:264.62px;font-size:9.6px;letter-spacing:-0.362px;color:#5a5a5a;">2.0 TB Ext4</div><svg class="a" style="left:878px;top:214px;" width="14" height="14" viewBox="0 0 14 14"><path d="M7 0.600 8.700 5.200 13.600 5.400 9.700 8.400 11.100 13.100 7 10.400 2.900 13.100 4.300 8.400 0.400 5.400 5.300 5.200z" fill="rgba(120,40,40,.6)"/></svg><svg class="a" style="left:897px;top:212px;" width="12" height="17" viewBox="0 0 12 17"><rect x="0.800" y="8" width="10.400" height="8.200" fill="rgba(120,40,40,.6)"/><path d="M7.300 8V4.500a2.400 2.400 0 0 1 4.800 0v1.300" fill="none" stroke="rgba(120,40,40,.6)" stroke-width="1.300" transform="translate(-1.500,0)"/></svg><svg class="a" style="left:878px;top:274px;" width="14" height="14" viewBox="0 0 14 14"><path d="M7 0.600 8.700 5.200 13.600 5.400 9.700 8.400 11.100 13.100 7 10.400 2.900 13.100 4.300 8.400 0.400 5.400 5.300 5.200z" fill="#5e5e5e"/></svg><svg class="a" style="left:898px;top:275px;" width="11" height="12" viewBox="0 0 11 12"><path d="M0.300 0.300 10.700 6 0.300 11.700z" fill="#5e5e5e"/></svg><svg class="a" style="left:231px;top:302px;" width="13" height="16" viewBox="0 0 13 16"><rect x="1" y="7" width="11" height="8" rx="0.800" fill="#5e5e5e"/><path d="M3.600 7V4.500a2.900 2.900 0 0 1 5.800 0V7" fill="none" stroke="#5e5e5e" stroke-width="1.500"/></svg><div class="a " style="left:880px;top:293px;width:35px;height:34px;background:#e9103a;border-radius:0 0 4px 0"></div><div class="a " style="left:893px;top:309.5px;width:9px;height:1.2px;background:#f7b5c0"></div><svg class="a" style="left:263px;top:300.5px;" width="19" height="19" viewBox="0 0 19 19"><circle cx="9.500" cy="9.500" r="6.500" fill="none" stroke="#555" stroke-width="1.200"/><circle cx="9.500" cy="9.500" r="4.300" fill="none" stroke="#555" stroke-width="1"/><g stroke="#555" stroke-width="2.600"><path d="M9.500 1.700v1.300" transform="rotate(0 9.500 9.500)"/><path d="M9.500 1.700v1.300" transform="rotate(45 9.500 9.500)"/><path d="M9.500 1.700v1.300" transform="rotate(90 9.500 9.500)"/><path d="M9.500 1.700v1.300" transform="rotate(135 9.500 9.500)"/><path d="M9.500 1.700v1.300" transform="rotate(180 9.500 9.500)"/><path d="M9.500 1.700v1.300" transform="rotate(225 9.500 9.500)"/><path d="M9.500 1.700v1.300" transform="rotate(270 9.500 9.500)"/><path d="M9.500 1.700v1.300" transform="rotate(315 9.500 9.500)"/></g></svg><div class="a " style="left:220px;top:293px;width:694px;height:1px;background:#d2d2d2"></div><div class="t " style="left:287.9px;top:335.73px;font-size:14.5px;letter-spacing:-0.427px;color:#a1a1a1;">Size</div><div class="t " style="left:326.6px;top:335.73px;font-size:14.5px;letter-spacing:-0.149px;color:#4d4d4d;">2.0 TB (2,048,406,847,488 bytes)</div><div class="t " style="left:255.4px;top:353.78px;font-size:14.5px;letter-spacing:0.121px;color:#a1a1a1;">Contents</div><div class="t " style="left:326.6px;top:353.78px;font-size:14.5px;letter-spacing:-0.077px;color:#4d4d4d;">LUKS Encryption (version 2) — Unlocked</div><div class="t " style="left:271.4px;top:371.83px;font-size:14.5px;letter-spacing:-0.220px;color:#a1a1a1;">Device</div><div class="t " style="left:326.6px;top:371.83px;font-size:14.5px;letter-spacing:0.270px;color:#4d4d4d;">/dev/nvme0n1p1</div><div class="t " style="left:281.4px;top:389.88px;font-size:14.5px;letter-spacing:-0.611px;color:#a1a1a1;">UUID</div><div class="t " style="left:326.6px;top:389.88px;font-size:14.5px;letter-spacing:-0.006px;color:#4d4d4d;">d8531915-0695-46ac-b80a-cbb55558297f</div><div class="t " style="left:219.9px;top:407.93px;font-size:14.5px;letter-spacing:0.436px;color:#a1a1a1;">Partition Type</div><div class="t " style="left:326.6px;top:407.93px;font-size:14.5px;letter-spacing:-0.130px;color:#4d4d4d;">ca7d7ccb-63ed-4c53-861c-1742536059cc</div></div></div><div class="a" style="left:993px;top:616px;width:927px;height:584px;overflow:hidden"><div class="a " style="left:0px;top:0px;width:929px;height:585px;background:#fafafa"></div><div class="a " style="left:200px;top:0px;width:1px;height:585px;background:#d9d9d9"></div><div class="a " style="left:0px;top:46px;width:929px;height:1px;background:#d9d9d9"></div><div class="t " style="left:81.5px;top:15.73px;font-size:14.5px;letter-spacing:-0.439px;font-weight:700;color:#3d3d3d;">Disks</div><div class="a " style="left:158px;top:6px;width:36px;height:34px;border:1px solid #cfcfcf;border-radius:7px;background:#fbfbfb"></div><svg class="a" style="left:170px;top:16px;" width="12" height="14" viewBox="0 0 12 14"><path d="M1 2.500h10M1 6.500h10M1 10.500h10" stroke="#4a4a4a" stroke-width="1"/></svg><div class="t " style="left:526.5px;top:7.73px;font-size:14.5px;letter-spacing:-0.379px;font-weight:700;color:#3d3d3d;">2.0 TB Disk</div><div class="t " style="left:524.0px;top:25.22px;font-size:12.5px;letter-spacing:0.040px;color:#a3a3a3;">/dev/nvme0n1</div><div class="a " style="left:758px;top:6px;width:36px;height:34px;border:1px solid #cfcfcf;border-radius:7px;background:#fbfbfb"></div><svg class="a" style="left:774px;top:16px;" width="4" height="16" viewBox="0 0 4 16"><circle cx="2" cy="3" r="1.100" fill="#4a4a4a"/><circle cx="2" cy="8" r="1.100" fill="#4a4a4a"/><circle cx="2" cy="13" r="1.100" fill="#4a4a4a"/></svg><svg class="a" style="left:814px;top:-0.5px;" width="100" height="47" viewBox="0 0 100 47"><path d="M6 25.500h8.300" stroke="#444" stroke-width="1"/><rect x="46.500" y="19.500" width="7" height="7" fill="none" stroke="#444" stroke-width="1"/><path d="M86.200 19.200l8 8M94.200 19.200l-8 8" stroke="#444" stroke-width="1.100"/></svg><div class="a " style="left:0px;top:47px;width:200px;height:40px;background:#e95420"></div><svg class="a" style="left:5px;top:52.5px;" width="26" height="29" viewBox="0 0 26 29"><defs><linearGradient id="sgo0" x1="0" y1="0" x2="0" y2="1"><stop offset="0" stop-color="#a2a2a2"/><stop offset="1" stop-color="#cfcfcf"/></linearGradient></defs>
<rect x="0.500" y="0.500" width="25" height="28" rx="3.500" fill="url(#sgo0)" stroke="#8e8e8e" stroke-width="1"/><text x="3.800" y="25.200" font-family="Liberation Sans" font-size="10.300" fill="#8c8c8c" textLength="21.500" lengthAdjust="spacingAndGlyphs">SSD</text></svg><div class="t " style="left:36.3px;top:51.83px;font-size:14.5px;letter-spacing:-0.461px;color:#ffffff;">2.0 TB Disk</div><div class="t " style="left:36.3px;top:69.9px;font-size:12.4px;letter-spacing:-0.066px;color:#ffffff;">3500 Micron 2048GB</div><svg class="a" style="left:5px;top:92.5px;" width="26" height="29" viewBox="0 0 26 29"><defs><linearGradient id="sgo1" x1="0" y1="0" x2="0" y2="1"><stop offset="0" stop-color="#a2a2a2"/><stop offset="1" stop-color="#cfcfcf"/></linearGradient></defs>
<rect x="0.500" y="0.500" width="25" height="28" rx="3.500" fill="url(#sgo1)" stroke="#8e8e8e" stroke-width="1"/><text x="3.800" y="25.200" font-family="Liberation Sans" font-size="10.300" fill="#8c8c8c" textLength="21.500" lengthAdjust="spacingAndGlyphs">SSD</text></svg><div class="t " style="left:36.3px;top:91.83px;font-size:14.5px;letter-spacing:-0.479px;color:#4a4a4a;">1.0 TB Disk</div><div class="t " style="left:36.3px;top:109.9px;font-size:12.4px;letter-spacing:-0.429px;color:#4a4a4a;">KXG80ZNV1…  OXIA 1024GB</div><svg class="a" style="left:5px;top:132.5px;" width="26" height="29" viewBox="0 0 26 29"><defs><linearGradient id="sgo2" x1="0" y1="0" x2="0" y2="1"><stop offset="0" stop-color="#a2a2a2"/><stop offset="1" stop-color="#cfcfcf"/></linearGradient></defs>
<rect x="0.500" y="0.500" width="25" height="28" rx="3.500" fill="url(#sgo2)" stroke="#8e8e8e" stroke-width="1"/><g fill="none" stroke="#8a8a8a" stroke-width="1.300"><path d="M13 8v13"/><path d="M9 14v1.500c0 1.500 4 2 4 4"/><path d="M17 12.500v2c0 1.500-4 2-4 4"/></g>
<path d="M13 5l2 3.600h-4z" fill="#8a8a8a"/><circle cx="9" cy="13.300" r="1.400" fill="#8a8a8a"/><rect x="15.700" y="10.500" width="2.600" height="2.600" fill="#8a8a8a"/><rect x="11.600" y="20" width="2.800" height="3.200" rx="0.600" fill="#8a8a8a"/></svg><div class="t " style="left:36.3px;top:131.83px;font-size:14.5px;letter-spacing:-0.286px;color:#4a4a4a;">16 GB Thumb Drive</div><div class="t " style="left:36.3px;top:149.9px;font-size:12.4px;letter-spacing:-0.311px;color:#4a4a4a;">JetFlash Transcend 16GB</div><svg class="a" style="left:4px;top:174px;" width="29" height="26" viewBox="0 0 29 26"><defs><linearGradient id="bgo3" x1="0" y1="0" x2="0" y2="1"><stop offset="0" stop-color="#a0a0a0"/><stop offset="1" stop-color="#d0d0d0"/></linearGradient></defs>
<rect x="0.500" y="0.500" width="28" height="25" rx="3.500" fill="url(#bgo3)" stroke="#8e8e8e"/>
<path d="M1 19.500h27v3a3 3 0 0 1-3 3h-21a3 3 0 0 1-3-3z" fill="#b9b9b9"/>
<rect x="2.500" y="20.500" width="24" height="2.200" rx="1" fill="#4f4f4f"/></svg><div class="t " style="left:36.3px;top:171.83px;font-size:14.5px;letter-spacing:-0.305px;color:#4a4a4a;">1.0 TB Block Device</div><div class="t " style="left:36.3px;top:189.9px;font-size:12.4px;letter-spacing:0.188px;color:#4a4a4a;">/dev/ubuntu-vg/ubuntu-lv</div><div class="t " style="left:259.4px;top:60.83px;font-size:14.5px;letter-spacing:0.501px;color:#a1a1a1;">Model</div><div class="t " style="left:314.5px;top:60.83px;font-size:14.5px;letter-spacing:-0.129px;color:#4d4d4d;">3500 Micron 2048GB (35000100)</div><div class="t " style="left:207.4px;top:78.88px;font-size:14.5px;letter-spacing:0.102px;color:#a1a1a1;">Serial Number</div><div class="t " style="left:314.5px;top:78.88px;font-size:14.5px;letter-spacing:-0.223px;color:#4d4d4d;">240446A7391F</div><div class="t " style="left:275.4px;top:96.93px;font-size:14.5px;letter-spacing:-0.552px;color:#a1a1a1;">Size</div><div class="t " style="left:314.5px;top:96.93px;font-size:14.5px;letter-spacing:-0.180px;color:#4d4d4d;">2.0 TB (2,048,408,248,320 bytes)</div><div class="t " style="left:222.4px;top:114.98px;font-size:14.5px;letter-spacing:0.538px;color:#a1a1a1;">Partitioning</div><div class="t " style="left:314.5px;top:114.98px;font-size:14.5px;letter-spacing:0.205px;color:#4d4d4d;">GUID Partition Table</div><div class="t " style="left:207.2px;top:144.53px;font-size:14.5px;letter-spacing:0.020px;font-weight:700;color:#3d3d3d;">Volumes</div><div class="a" style="left:219px;top:173px;width:696px;height:154px;border:1px solid #c6c6c6;border-radius:5px;background:#ebebeb;overflow:hidden"><div class="a" style="left:0;top:0px;width:694px;height:60px;background:#fff"></div><div class="a" style="left:0;top:60px;width:694px;height:59px;background:radial-gradient(ellipse 60% 140% at 50% 55%, #eb8059 0%, #e27d59 55%, #d67a5b 100%);border-bottom:1px solid #cc4f27;"><div class="a" style="left:2px;top:1px;right:2px;bottom:1px;border:2px solid rgba(255,220,195,.27);border-radius:6px"></div></div><div class="a" style="left:0;top:119px;width:35px;height:34px;background:#fafafa;border-right:1px solid #cfcfcf"></div><div class="a" style="left:35px;top:119px;width:35px;height:34px;background:#fafafa;border-right:1px solid #cfcfcf"></div></div><div class="t " style="left:545.5px;top:191.67px;font-size:9.6px;letter-spacing:-0.020px;color:#5a5a5a;">Partition 1</div><div class="t " style="left:541.5px;top:204.62px;font-size:9.6px;letter-spacing:-0.441px;color:#5a5a5a;">2.0 TB LUKS</div><div class="t " style="left:545.5px;top:251.57px;font-size:9.6px;letter-spacing:0.230px;color:rgba(70,40,40,.62);">datanvme</div><div class="t " style="left:544.5px;top:264.62px;font-size:9.6px;letter-spacing:-0.362px;color:rgba(70,40,40,.62);">2.0 TB Ext4</div><svg class="a" style="left:878px;top:214px;" width="14" height="14" viewBox="0 0 14 14"><path d="M7 0.600 8.700 5.200 13.600 5.400 9.700 8.400 11.100 13.100 7 10.400 2.900 13.100 4.300 8.400 0.400 5.400 5.300 5.200z" fill="#5e5e5e"/></svg><svg class="a" style="left:897px;top:212px;" width="12" height="17" viewBox="0 0 12 17"><rect x="0.800" y="8" width="10.400" height="8.200" fill="#5e5e5e"/><path d="M7.300 8V4.500a2.400 2.400 0 0 1 4.800 0v1.300" fill="none" stroke="#5e5e5e" stroke-width="1.300" transform="translate(-1.500,0)"/></svg><svg class="a" style="left:878px;top:274px;" width="14" height="14" viewBox="0 0 14 14"><path d="M7 0.600 8.700 5.200 13.600 5.400 9.700 8.400 11.100 13.100 7 10.400 2.900 13.100 4.300 8.400 0.400 5.400 5.300 5.200z" fill="#6b605d"/></svg><svg class="a" style="left:898px;top:275px;" width="11" height="12" viewBox="0 0 11 12"><path d="M0.300 0.300 10.700 6 0.300 11.700z" fill="#6b605d"/></svg><div class="a " style="left:232px;top:305px;width:10px;height:10px;background:#5e5e5e"></div><svg class="a" style="left:263px;top:300.5px;" width="19" height="19" viewBox="0 0 19 19"><circle cx="9.500" cy="9.500" r="6.500" fill="none" stroke="#555" stroke-width="1.200"/><circle cx="9.500" cy="9.500" r="4.300" fill="none" stroke="#555" stroke-width="1"/><g stroke="#555" stroke-width="2.600"><path d="M9.500 1.700v1.300" transform="rotate(0 9.500 9.500)"/><path d="M9.500 1.700v1.300" transform="rotate(45 9.500 9.500)"/><path d="M9.500 1.700v1.300" transform="rotate(90 9.500 9.500)"/><path d="M9.500 1.700v1.300" transform="rotate(135 9.500 9.500)"/><path d="M9.500 1.700v1.300" transform="rotate(180 9.500 9.500)"/><path d="M9.500 1.700v1.300" transform="rotate(225 9.500 9.500)"/><path d="M9.500 1.700v1.300" transform="rotate(270 9.500 9.500)"/><path d="M9.500 1.700v1.300" transform="rotate(315 9.500 9.500)"/></g></svg><div class="t " style="left:252.3px;top:334.93px;font-size:14.5px;letter-spacing:-0.427px;color:#a1a1a1;">Size</div><div class="t " style="left:291.2px;top:334.93px;font-size:14.5px;letter-spacing:-0.149px;color:#4d4d4d;">2.0 TB — 2.0 TB free (1.6% full)</div><div class="t " style="left:219.8px;top:352.98px;font-size:14.5px;letter-spacing:0.121px;color:#a1a1a1;">Contents</div><div class="t " style="left:291.2px;top:352.98px;font-size:14.5px;letter-spacing:0.054px;color:#4d4d4d;">Ext4 (version 1.0) — Mounted at </div><div class="t " style="left:505.6px;top:352.98px;font-size:14.5px;letter-spacing:0.623px;color:#c4471b;text-decoration:underline;text-decoration-thickness:1.300px;text-underline-offset:2px">/mnt/datanvme</div><div class="t " style="left:235.8px;top:371.03px;font-size:14.5px;letter-spacing:-0.220px;color:#a1a1a1;">Device</div><div class="t " style="left:291.2px;top:371.03px;font-size:14.5px;letter-spacing:0.357px;color:#4d4d4d;">/dev/mapper/dm_crypt-1</div><div class="t " style="left:245.8px;top:389.08px;font-size:14.5px;letter-spacing:-0.611px;color:#a1a1a1;">UUID</div><div class="t " style="left:291.2px;top:389.08px;font-size:14.5px;letter-spacing:-0.015px;color:#4d4d4d;">225a7b94-29ff-487e-a772-a9d77a5a95e7</div></div><div id="topbar" class="a"><div class="a " style="left:15px;top:12px;width:29px;height:8px;background:#f2f2f2;border-radius:4px"></div><div class="a " style="left:50px;top:13px;width:6px;height:6px;background:#8c8c8c;border-radius:3px"></div><div class="t " style="left:952.9px;top:7.83px;font-size:14.5px;letter-spacing:-0.149px;color:#f2f2f2;">Jul 25</div><div class="t " style="left:999.3px;top:7.83px;font-size:14.5px;letter-spacing:-0.557px;color:#f2f2f2;">14:24</div><div class="a " style="left:1847px;top:3px;width:70px;height:26px;background:#525252;border-radius:13px"></div><svg class="a" style="left:1860px;top:8px;" width="16" height="16" viewBox="0 0 16 16"><path d="M1 5.5h3l4-4.2v13.4l-4-4.2h-3z" fill="#f2f2f2"/><path d="M10.2 5.2a4 4 0 0 1 0 5.6" stroke="#f2f2f2" stroke-width="1.3" fill="none"/><path d="M12 3a7 7 0 0 1 0 10" stroke="#bdbdbd" stroke-width="1.2" fill="none"/></svg><svg class="a" style="left:1890px;top:7px;" width="12" height="17" viewBox="0 0 12 17"><rect x="3.5" y="0.6" width="5" height="2" rx="0.8" fill="#f2f2f2"/><rect x="1.2" y="2.2" width="9.6" height="14" rx="1.8" fill="none" stroke="#f2f2f2" stroke-width="1.2"/><rect x="3" y="4" width="6" height="10.4" rx="0.6" fill="#f2f2f2"/></svg></div></body></html>
